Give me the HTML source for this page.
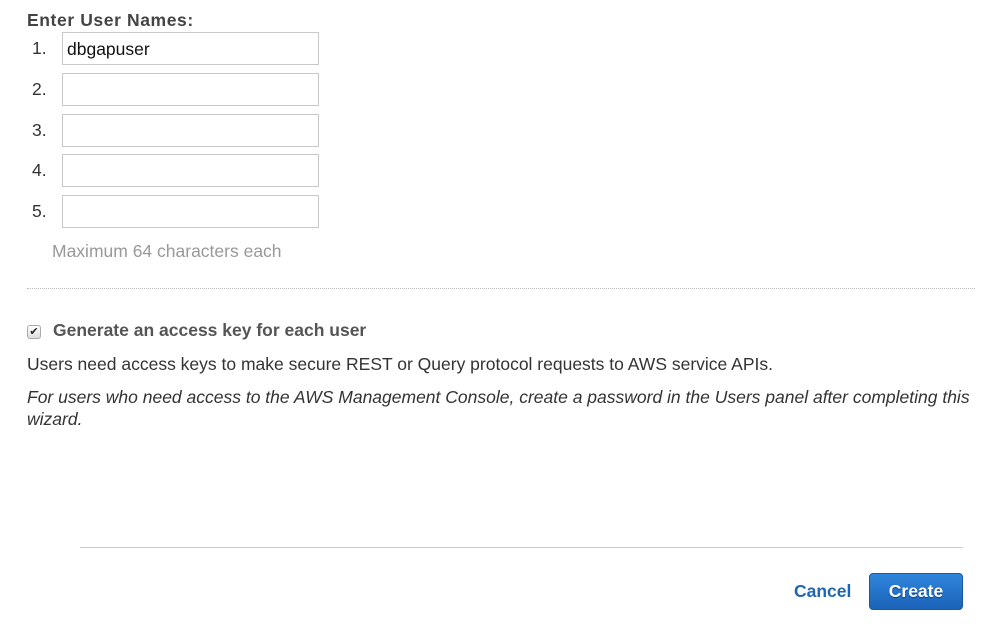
<!DOCTYPE html>
<html><head><style>
body{margin:0;width:986px;height:628px;background:#fff;font-family:"Liberation Sans",sans-serif;color:#333;position:relative;overflow:hidden}
.a{position:absolute;white-space:nowrap}
.in{position:absolute;left:62px;border:1px solid #c8c8c8;box-sizing:border-box;width:257px;height:33px;font-size:17.5px;padding:6px 0 0 4px;color:#111}
.n{position:absolute;left:32px;font-size:17.5px;color:#333}
</style></head><body>
<div class="a" style="left:27px;top:10px;font-size:17.5px;font-weight:bold;color:#444;letter-spacing:0.6px">Enter User Names:</div>
<div class="n" style="top:38px">1.</div><div class="in" style="top:32px">dbgapuser</div>
<div class="n" style="top:79px">2.</div><div class="in" style="top:73px"></div>
<div class="n" style="top:120px">3.</div><div class="in" style="top:114px"></div>
<div class="n" style="top:160px">4.</div><div class="in" style="top:154px"></div>
<div class="n" style="top:201px">5.</div><div class="in" style="top:195px"></div>
<div class="a" style="left:52px;top:241px;font-size:17.5px;color:#999">Maximum 64 characters each</div>
<div class="a" style="left:27px;top:288px;width:948px;border-top:1px dotted #bbb"></div>
<div class="a" style="left:27px;top:325px;width:12px;height:12px;border:1px solid #aaa;border-radius:3px;background:linear-gradient(#fff,#ddd);font-size:11px;line-height:12px;text-align:center;color:#222">✔</div>
<div class="a" style="left:53px;top:320px;font-size:17.5px;font-weight:bold;color:#555">Generate an access key for each user</div>
<div class="a" style="left:27px;top:354px;font-size:17.5px;color:#333">Users need access keys to make secure REST or Query protocol requests to AWS service APIs.</div>
<div class="a" style="left:27px;top:386px;font-size:17.5px;font-style:italic;color:#333;line-height:22px;white-space:normal;width:950px">For users who need access to the AWS Management Console, create a password in the Users panel after completing this wizard.</div>
<div class="a" style="left:80px;top:547px;width:883px;border-top:1px solid #ccc"></div>
<div class="a" style="left:794px;top:581px;font-size:17.5px;font-weight:bold;color:#1e66b3">Cancel</div>
<div class="a" style="left:869px;top:573px;width:94px;height:37px;border-radius:4px;background:linear-gradient(#2f86dc,#1a63b8);border:1px solid #1559a8;box-sizing:border-box;color:#fff;font-weight:bold;font-size:17.5px;text-align:center;line-height:35px;text-shadow:0 1px 1px #0a3e80">Create</div>
</body></html>
